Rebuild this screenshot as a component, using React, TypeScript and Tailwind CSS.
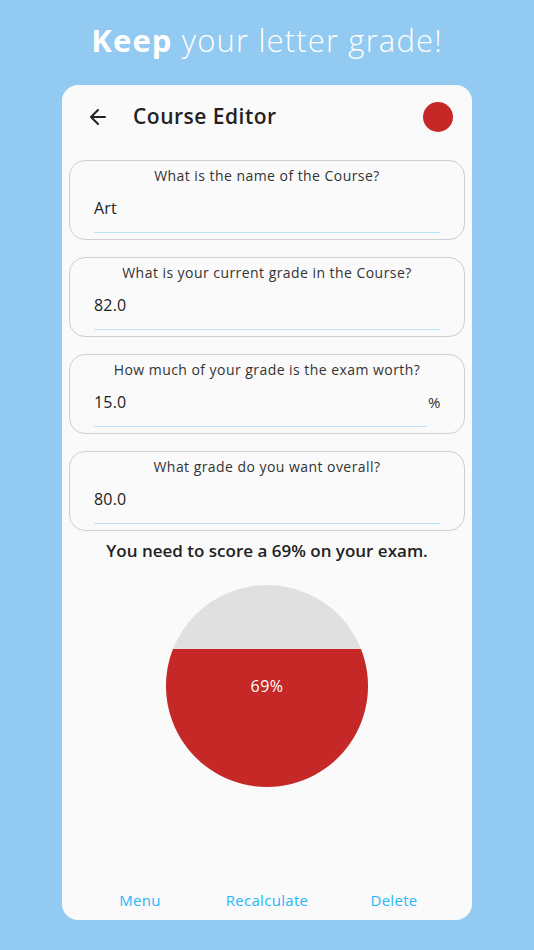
import React from "react";

const fields = [
  { label: "What is the name of the Course?", value: "Art" },
  { label: "What is your current grade in the Course?", value: "82.0" },
  { label: "How much of your grade is the exam worth?", value: "15.0", suffix: "%" },
  { label: "What grade do you want overall?", value: "80.0" },
];

const Field = ({ label, value, suffix }: { label: string; value: string; suffix?: string }) => (
  <div className="h-[80px] rounded-[16px] border border-[#cfcfcf] px-6 pt-[4px]">
    <div className="text-center text-[14px] text-[#333] tracking-[0.45px]">{label}</div>
    <div className="flex items-start mt-[11px]">
      <div className="flex-1">
        <div className="text-[16px] text-[#222] leading-[22px] pb-[13px] tracking-[0.2px]">{value}</div>
        <div className="h-px bg-[#b9e2fa]" />
      </div>
      {suffix && <div className="text-[15px] text-[#333] leading-[22px] w-[12px] ml-[1px] text-right">{suffix}</div>}
    </div>
  </div>
);

const Pie = () => (
  <svg width="202" height="202" viewBox="0 0 202 202" className="block">
    <circle cx="101" cy="101" r="101" fill="#e0e0e0" />
    <path d="M 7 64 A 101 101 0 1 0 195 64 Z" fill="#c62828" />
    <text x="101" y="107" textAnchor="middle" fill="#fff" fontSize="16" letterSpacing="0.5" fontFamily="'Open Sans', sans-serif">
      69%
    </text>
  </svg>
);

export default function App() {
  return (
    <div className="w-[534px] h-[950px] bg-[#92caf1] flex flex-col items-center" style={{ fontFamily: "'Open Sans', 'Liberation Sans', sans-serif" }}>
      <h1 className="mt-[20px] text-[31px] text-white leading-[40px] tracking-[1.15px]">
        <span className="font-bold">Keep</span> <span className="font-light">your letter grade!</span>
      </h1>
      <div className="mt-[25px] w-[410px] h-[835px] bg-[#fafafa] rounded-[16px] flex flex-col px-[7px]">
        <div className="flex items-center h-[64px]">
          <svg width="24" height="24" viewBox="0 0 24 24" className="ml-[17px]" fill="none" stroke="#222" strokeWidth="2" strokeLinecap="round" strokeLinejoin="round">
            <path d="M19 12H5M12 19l-7-7 7-7" />
          </svg>
          <div className="ml-[23px] text-[21px] font-semibold text-[#222] tracking-[0.5px]">Course Editor</div>
          <div className="ml-auto mr-[12px] w-[30px] h-[30px] rounded-full bg-[#c62828]" />
        </div>
        <div className="mt-[11px] flex flex-col gap-[17px]">
          {fields.map((f) => (
            <Field key={f.label} {...f} />
          ))}
        </div>
        <div className="mt-[7px] text-center text-[17px] font-semibold text-[#222]">You need to score a 69% on your exam.</div>
        <div className="mt-[21px] flex justify-center">
          <Pie />
        </div>
        <div className="flex-1" />
        <div className="grid grid-cols-3 pb-[9px] text-[15px] text-[#29b6f6] tracking-[0.3px]">
          <div className="text-center pl-[10px]">Menu</div>
          <div className="text-center">Recalculate</div>
          <div className="text-center pr-[10px]">Delete</div>
        </div>
      </div>
    </div>
  );
}
